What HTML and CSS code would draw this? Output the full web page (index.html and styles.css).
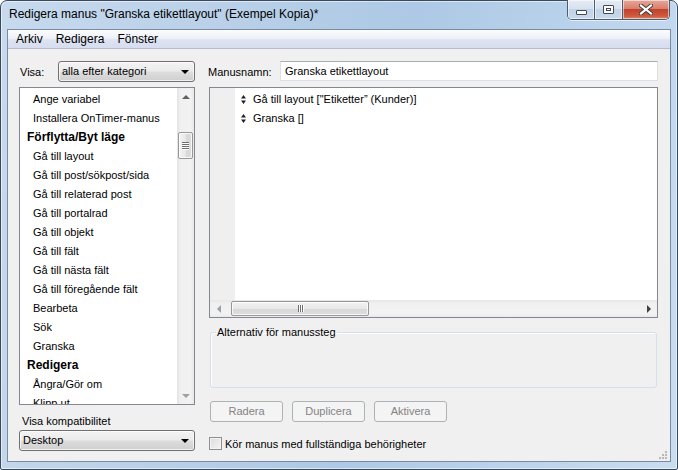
FILE: index.html
```html
<!DOCTYPE html>
<html>
<head>
<meta charset="utf-8">
<link rel="stylesheet" href="styles.css">
</head>
<body>
<div class="window">
  <div class="titlebar">
    <div class="title">Redigera manus "Granska etikettlayout" (Exempel Kopia)*</div>
    <div class="caption-buttons">
      <div class="cb cb-min"><span class="min-glyph"></span></div>
      <div class="cb cb-max"><span class="max-glyph"></span></div>
      <div class="cb cb-close">
        <svg width="14" height="11" viewBox="0 0 14 11">
          <path d="M2 1.5 L12 9.5 M12 1.5 L2 9.5" stroke="#3b3b3b" stroke-width="4" stroke-linecap="square"/>
          <path d="M2 1.5 L12 9.5 M12 1.5 L2 9.5" stroke="#ffffff" stroke-width="2.2" stroke-linecap="square"/>
        </svg>
      </div>
    </div>
  </div>
  <div class="client">
    <div class="menubar">
      <span class="menu-item">Arkiv</span>
      <span class="menu-item">Redigera</span>
      <span class="menu-item">Fönster</span>
    </div>
    <div class="content">
      <div class="leftcol">
        <div class="visa-row">
          <span class="visa-label">Visa:</span>
          <div class="combo combo-visa"><span>alla efter kategori</span><i class="arrow"></i></div>
        </div>
        <div class="listbox">
          <div class="list-items">
            <div class="li">Ange variabel</div>
            <div class="li">Installera OnTimer-manus</div>
            <div class="li head">Förflytta/Byt läge</div>
            <div class="li">Gå till layout</div>
            <div class="li">Gå till post/sökpost/sida</div>
            <div class="li">Gå till relaterad post</div>
            <div class="li">Gå till portalrad</div>
            <div class="li">Gå till objekt</div>
            <div class="li">Gå till fält</div>
            <div class="li">Gå till nästa fält</div>
            <div class="li">Gå till föregående fält</div>
            <div class="li">Bearbeta</div>
            <div class="li">Sök</div>
            <div class="li">Granska</div>
            <div class="li head">Redigera</div>
            <div class="li">Ångra/Gör om</div>
            <div class="li">Klipp ut</div>
          </div>
          <div class="vscroll">
            <div class="sb-btn"><i class="tri-up"></i></div>
            <div class="vtrack">
              <div class="vthumb"><i class="grip-h"></i><i class="grip-h"></i><i class="grip-h"></i><i class="grip-h"></i></div>
            </div>
            <div class="sb-btn"><i class="tri-down"></i></div>
          </div>
        </div>
        <div class="compat-label">Visa kompatibilitet</div>
        <div class="combo combo-compat"><span>Desktop</span><i class="arrow"></i></div>
      </div>
      <div class="rightcol">
        <div class="name-row">
          <span class="name-label">Manusnamn:</span>
          <div class="textbox">Granska etikettlayout</div>
        </div>
        <div class="steps">
          <div class="steps-body">
            <div class="gutter"></div>
            <div class="step-lines">
              <div class="step"><svg class="mover" width="5" height="9" viewBox="0 0 5 9"><path d="M2.5 0 L5 3.5 L0 3.5 Z M2.5 9 L5 5.5 L0 5.5 Z" fill="#222"/></svg><span>Gå till layout ["Etiketter” (Kunder)]</span></div>
              <div class="step"><svg class="mover" width="5" height="9" viewBox="0 0 5 9"><path d="M2.5 0 L5 3.5 L0 3.5 Z M2.5 9 L5 5.5 L0 5.5 Z" fill="#222"/></svg><span>Granska []</span></div>
            </div>
          </div>
          <div class="hscroll">
            <div class="sb-hbtn"><i class="tri-left"></i></div>
            <div class="htrack">
              <div class="hthumb"><i class="grip-v"></i><i class="grip-v"></i><i class="grip-v"></i></div>
            </div>
            <div class="sb-hbtn"><i class="tri-right"></i></div>
          </div>
        </div>
        <fieldset class="options">
          <legend>Alternativ för manussteg</legend>
        </fieldset>
        <div class="buttons">
          <div class="btn">Radera</div>
          <div class="btn">Duplicera</div>
          <div class="btn">Aktivera</div>
        </div>
        <div class="check-row">
          <span class="checkbox"></span>
          <span class="check-label">Kör manus med fullständiga behörigheter</span>
        </div>
      </div>
    </div>
    <svg class="grip" width="8" height="8" viewBox="0 0 8 8">
      <rect x="6" y="0" width="2" height="2" fill="#b8b8b8"/>
      <rect x="3" y="3" width="2" height="2" fill="#b8b8b8"/>
      <rect x="6" y="3" width="2" height="2" fill="#b8b8b8"/>
      <rect x="0" y="6" width="2" height="2" fill="#b8b8b8"/>
      <rect x="3" y="6" width="2" height="2" fill="#b8b8b8"/>
      <rect x="6" y="6" width="2" height="2" fill="#b8b8b8"/>
    </svg>
  </div>
</div>
</body>
</html>
```

FILE: styles.css
```css
* { box-sizing: border-box; }
html, body {
  margin: 0;
  padding: 0;
  width: 678px;
  height: 470px;
  overflow: hidden;
  background: #ffffff;
  font-family: "Liberation Sans", Arial, sans-serif;
  font-size: 12px;
  color: #000;
}
.window {
  width: 678px;
  height: 470px;
  border: 1px solid #3a4a5c;
  border-radius: 7px 7px 2px 2px;
  background: linear-gradient(100deg, #c7daee 0%, #b9d0e8 30%, #adc9e5 55%, #bcd4ec 80%, #c9ddf1 100%);
  display: flex;
  flex-direction: column;
  box-shadow: inset 0 0 0 1px rgba(255,255,255,0.55);
}
.titlebar {
  height: 28px;
  display: flex;
  justify-content: space-between;
  align-items: flex-start;
  padding-left: 8px;
  padding-right: 7px;
}
.title {
  padding-top: 6px;
  line-height: 15px;
  font-size: 12px;
  color: #000;
  white-space: nowrap;
}
.caption-buttons {
  display: flex;
  margin-top: -1px;
  height: 20px;
  border: 1px solid #4d5c72;
  border-top: none;
  border-radius: 0 0 5px 5px;
  overflow: hidden;
  box-shadow: 0 1px 0 rgba(255,255,255,0.6);
}
.cb {
  height: 19px;
  display: flex;
  align-items: center;
  justify-content: center;
  box-shadow: inset 0 0 0 1px rgba(255,255,255,0.55);
}
.cb-min, .cb-max {
  width: 27px;
  background: linear-gradient(#e4ebf4 0%, #d7e2ef 45%, #c2d3e7 50%, #c8d9ec 100%);
  border-right: 1px solid #4d5c72;
}
.cb-max { width: 28px; }
.cb-close {
  width: 46px;
  background: linear-gradient(#e6a79a 0%, #d9806c 45%, #c2422c 50%, #cd5a3f 85%, #dd8a62 100%);
}
.min-glyph {
  display: block;
  width: 11px;
  height: 5px;
  margin-top: 6px;
  background: #fff;
  border: 1px solid #3e4a5c;
  border-radius: 1px;
}
.max-glyph {
  display: block;
  width: 11px;
  height: 9px;
  background: #fff;
  border: 1px solid #3e4a5c;
  box-shadow: inset 0 0 0 2px #fff, inset 0 0 0 3px #3e4a5c;
  border-radius: 1px;
}
.client {
  position: relative;
  margin: 0 6px 0 6px;
  height: 433px;
  border: 1px solid #7a8aa0;
  background: #f0f0f0;
  display: flex;
  flex-direction: column;
  font-size: 11px;
}
.menubar {
  height: 19px;
  border-bottom: 1px solid #b6bccc;
  background: linear-gradient(#fbfcfd 0%, #eef1f8 45%, #dde3f1 55%, #d6ddef 100%);
  display: flex;
  align-items: center;
  padding-left: 1px;
  font-size: 12px;
}
.menu-item {
  padding: 0 7px 0 7px;
  line-height: 18px;
}
.menu-item + .menu-item { margin-left: -1px; }
.content {
  flex: 1;
  display: flex;
  padding: 12px 12px 0 11px;
  gap: 13px;
}
.leftcol {
  width: 176px;
  display: flex;
  flex-direction: column;
}
.visa-row {
  display: flex;
  align-items: center;
  height: 21px;
}
.visa-label {
  width: 39px;
  padding-left: 1px;
}
.combo {
  position: relative;
  height: 21px;
  border: 1px solid #707070;
  border-radius: 3px;
  background: linear-gradient(#f3f3f3 0%, #ebebeb 48%, #dddddd 52%, #cfcfcf 100%);
  box-shadow: inset 0 0 0 1px rgba(255,255,255,0.7);
  display: flex;
  align-items: center;
  padding-left: 3px;
  line-height: 15px;
}
.combo-visa { width: 137px; }
.combo span { flex: 1; white-space: nowrap; }
.arrow {
  width: 0;
  height: 0;
  border-left: 4px solid transparent;
  border-right: 4px solid transparent;
  border-top: 4px solid #000;
  margin-right: 5px;
}
.listbox {
  margin-top: 5px;
  height: 318px;
  border: 1px solid #828790;
  background: #fff;
  display: flex;
}
.list-items {
  flex: 1;
  overflow: hidden;
  padding-top: 1px;
}
.li {
  height: 19px;
  line-height: 20px;
  padding-left: 13px;
  white-space: nowrap;
}
.li.head {
  font-weight: bold;
  font-size: 12px;
  padding-left: 7px;
}
.vscroll {
  width: 17px;
  display: flex;
  flex-direction: column;
  background: linear-gradient(90deg, #e3e3e3 0%, #f0f0f0 20%, #f2f2f2 80%, #e8e8e8 100%);
}
.sb-btn {
  height: 17px;
  display: flex;
  align-items: center;
  justify-content: center;
}
.tri-up {
  width: 0; height: 0;
  border-left: 4px solid transparent;
  border-right: 4px solid transparent;
  border-bottom: 4px solid #606060;
}
.tri-down {
  width: 0; height: 0;
  border-left: 4px solid transparent;
  border-right: 4px solid transparent;
  border-top: 4px solid #a0a0a0;
}
.vtrack {
  flex: 1;
  padding: 27px 1px 0 1px;
}
.vthumb {
  height: 27px;
  border: 1px solid #979797;
  border-radius: 2px;
  background: linear-gradient(90deg, #f3f3f3 0%, #e8e8e8 50%, #d8d8d8 51%, #dcdcdc 100%);
  box-shadow: inset 0 0 0 1px rgba(255,255,255,0.8);
  display: flex;
  flex-direction: column;
  align-items: center;
  justify-content: center;
  gap: 1px;
}
.grip-h {
  width: 7px;
  height: 1px;
  background: #6f6f6f;
  box-shadow: 0 1px 0 #fff;
}
.compat-label {
  margin-top: 9px;
  line-height: 15px;
  padding-left: 3px;
}
.combo-compat {
  margin-top: 1px;
  width: 176px;
}
.rightcol {
  flex: 1;
  display: flex;
  flex-direction: column;
}
.name-row {
  display: flex;
  align-items: center;
  height: 21px;
}
.name-label {
  width: 72px;
}
.textbox {
  flex: 1;
  height: 20px;
  margin-bottom: 1px;
  border: 1px solid #dcdfe6;
  border-top-color: #abadb3;
  background: #fff;
  padding-left: 4px;
  line-height: 18px;
}
.steps {
  margin-top: 5px;
  margin-left: 1px;
  height: 231px;
  border: 1px solid #828790;
  background: #fff;
  display: flex;
  flex-direction: column;
}
.steps-body {
  flex: 1;
  display: flex;
}
.gutter {
  width: 25px;
  background: #efefef;
}
.step-lines {
  flex: 1;
  padding-top: 1px;
  padding-left: 6px;
}
.step {
  height: 19px;
  display: flex;
  align-items: center;
  white-space: nowrap;
}
.mover { margin-right: 7px; margin-top: 1px; }
.hscroll {
  height: 17px;
  display: flex;
  background: linear-gradient(#e6e6e6 0%, #f0f0f0 20%, #f2f2f2 80%, #eaeaea 100%);
}
.sb-hbtn {
  width: 17px;
  display: flex;
  align-items: center;
  justify-content: center;
}
.tri-left {
  width: 0; height: 0;
  border-top: 4px solid transparent;
  border-bottom: 4px solid transparent;
  border-right: 4px solid #a0a0a0;
}
.tri-right {
  width: 0; height: 0;
  border-top: 4px solid transparent;
  border-bottom: 4px solid transparent;
  border-left: 4px solid #404040;
}
.htrack {
  flex: 1;
  padding: 1px 0;
  padding-left: 4px;
}
.hthumb {
  width: 138px;
  height: 15px;
  border: 1px solid #979797;
  border-radius: 2px;
  background: linear-gradient(#f3f3f3 0%, #e8e8e8 50%, #d8d8d8 51%, #dcdcdc 100%);
  box-shadow: inset 0 0 0 1px rgba(255,255,255,0.8);
  display: flex;
  align-items: center;
  justify-content: center;
  gap: 1px;
}
.grip-v {
  width: 1px;
  height: 7px;
  background: #6f6f6f;
  box-shadow: 1px 0 0 #fff;
}
.options {
  margin: 7px 1px 0 2px;
  padding: 0;
  height: 63px;
  border: 1px solid #d5dfe5;
  border-radius: 3px;
  box-shadow: inset 1px 1px 0 #fff;
}
.options legend {
  margin-left: 5px;
  padding: 0 1px;
  line-height: 15px;
  font-size: 11px;
}
.buttons {
  display: flex;
  gap: 9px;
  margin-top: 13px;
  margin-left: 2px;
}
.btn {
  width: 73px;
  height: 21px;
  border: 1px solid #adb2b5;
  border-radius: 3px;
  background: #f4f4f4;
  color: #838383;
  text-align: center;
  line-height: 19px;
}
.check-row {
  display: flex;
  align-items: center;
  margin-top: 15px;
  margin-left: 1px;
}
.checkbox {
  width: 13px;
  height: 13px;
  border: 1px solid #8f8f8f;
  background: linear-gradient(135deg, #dcdcdc 0%, #f4f4f4 100%);
  box-shadow: inset 0 0 0 1px #f4f4f4;
  margin-right: 3px;
}
.grip {
  position: absolute;
  right: 3px;
  bottom: 2px;
}
```
